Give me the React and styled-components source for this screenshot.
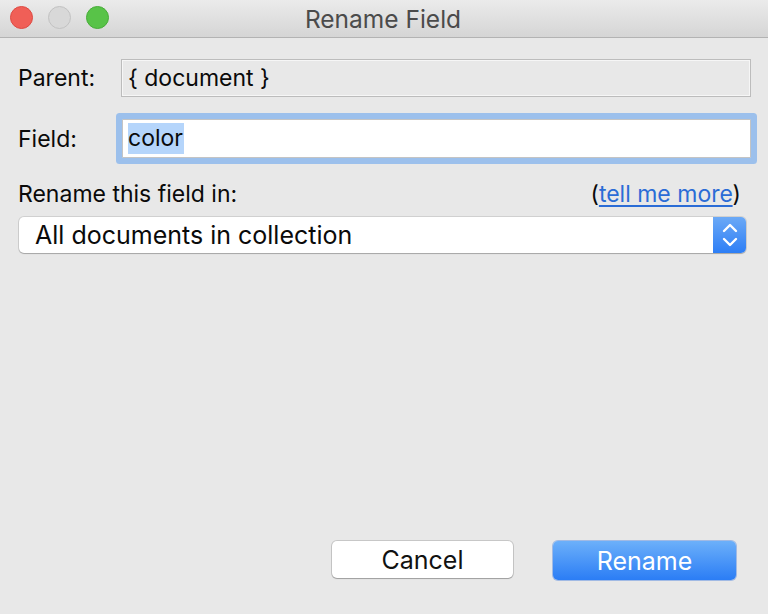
import React from 'react';
import styled, { createGlobalStyle } from 'styled-components';

const Global = createGlobalStyle`
  html, body {
    margin: 0;
    padding: 0;
    height: 100%;
  }
  body {
    background: #e8e8e8;
    font-family: Inter, "Noto Sans", "Liberation Sans", sans-serif;
    color: #0a0a0a;
  }
  #root {
    height: 100%;
  }
`;

const Window = styled.div`
  display: flex;
  flex-direction: column;
  height: 100vh;
  background: #e8e8e8;
`;

const TitleBar = styled.div`
  position: relative;
  height: 37px;
  flex-shrink: 0;
  display: flex;
  align-items: center;
  justify-content: center;
  background: linear-gradient(#ebebeb, #d5d5d5);
  border-bottom: 1px solid #b3b3b3;
`;

const Lights = styled.div`
  position: absolute;
  left: 10px;
  top: 6px;
  display: flex;
  gap: 15px;
`;

const Light = styled.span`
  width: 23px;
  height: 23px;
  border-radius: 50%;
  box-sizing: border-box;
  background: ${p => p.$bg};
  border: 1px solid ${p => p.$edge};
`;

const Title = styled.div`
  font-size: 24.5px;
  color: #4b4b4b;
  margin-left: -2px;
`;

const Body = styled.div`
  flex: 1;
  display: flex;
  flex-direction: column;
  padding: 21px 17px 0 18px;
`;

const FormGrid = styled.div`
  display: grid;
  grid-template-columns: 103px 1fr;
  row-gap: 22px;
  align-items: center;
`;

const Label = styled.div`
  font-size: 23px;
  line-height: 26px;
`;

const ReadOnlyBox = styled.div`
  height: 38px;
  box-sizing: border-box;
  border: 1px solid #bcbcbc;
  box-shadow: inset 0 0 0 1px #f6f6f6;
  background: #e8e8e8;
  display: flex;
  align-items: center;
  padding-left: 6px;
  font-size: 23px;
`;

const InputBox = styled.div`
  height: 39px;
  margin-left: 1px;
  box-sizing: border-box;
  border: 1px solid #c4c4c4;
  background: #fff;
  display: flex;
  align-items: center;
  padding-left: 5px;
  font-size: 23px;
  box-shadow: 0 0 0 1px #9cc0ec, 0 0 0 6px #9cc0ec;
  border-radius: 1px;
`;

const Selected = styled.span`
  background: #b5d5fb;
  line-height: 31px;
  padding-right: 1px;
`;

const RenameRow = styled.div`
  display: flex;
  justify-content: space-between;
  align-items: center;
  margin-top: 23px;
  padding-right: 10px;
  font-size: 23px;
  line-height: 26px;
`;

const Link = styled.a`
  color: #2b6cd6;
  text-decoration: underline;
  text-underline-offset: 3px;
  text-decoration-thickness: 2px;
  cursor: pointer;
`;

const Select = styled.div`
  margin-top: 10px;
  margin-left: 1px;
  margin-right: 5px;
  height: 36px;
  display: flex;
  border-radius: 5px;
  background: #fff;
  box-shadow: 0 0 0 1px rgba(0, 0, 0, 0.1), 0 1px 1px rgba(0, 0, 0, 0.2);
  overflow: hidden;
`;

const SelectValue = styled.div`
  flex: 1;
  display: flex;
  align-items: center;
  padding-left: 16px;
  font-size: 25px;
`;

const Stepper = styled.div`
  width: 33px;
  display: flex;
  align-items: center;
  justify-content: center;
  background: linear-gradient(#6ba9f6, #2d7ef6);
`;

const Footer = styled.div`
  margin-top: auto;
  display: flex;
  justify-content: flex-end;
  gap: 40px;
  padding: 0 15px 34px 0;
`;

const Button = styled.button`
  width: ${p => (p.$primary ? '183px' : '181px')};
  height: ${p => (p.$primary ? '39px' : '37px')};
  border-radius: 5px;
  font-family: inherit;
  font-size: 25px;
  cursor: pointer;
  border: none;
  ${p =>
    p.$primary
      ? `
    color: #fff;
    background: linear-gradient(#6cb0fa, #2b7df5);
    box-shadow: 0 0 0 1px rgba(30, 100, 220, 0.35);
  `
      : `
    color: #111;
    background: #fff;
    box-shadow: 0 0 0 1px rgba(0, 0, 0, 0.14), 0 1px 1px rgba(0, 0, 0, 0.2);
  `}
`;

const Chevrons = () => (
  <svg width="20" height="30" viewBox="0 0 20 30" fill="none">
    <path d="M4 11 L10 5 L16 11" stroke="#fff" strokeWidth="2.4" strokeLinecap="round" strokeLinejoin="round" />
    <path d="M4 19 L10 25 L16 19" stroke="#fff" strokeWidth="2.4" strokeLinecap="round" strokeLinejoin="round" />
  </svg>
);

export default function App() {
  return (
    <Window>
      <Global />
      <TitleBar>
        <Lights>
          <Light $bg="#f05f57" $edge="#de4a42" />
          <Light $bg="#d8d8d8" $edge="#c2c2c2" />
          <Light $bg="#58c348" $edge="#47ad38" />
        </Lights>
        <Title>Rename Field</Title>
      </TitleBar>
      <Body>
        <FormGrid>
          <Label>Parent:</Label>
          <ReadOnlyBox>{'{ document }'}</ReadOnlyBox>
          <Label>Field:</Label>
          <InputBox>
            <Selected>color</Selected>
          </InputBox>
        </FormGrid>
        <RenameRow>
          <span>Rename this field in:</span>
          <span>
            (<Link>tell me more</Link>)
          </span>
        </RenameRow>
        <Select>
          <SelectValue>All documents in collection</SelectValue>
          <Stepper>
            <Chevrons />
          </Stepper>
        </Select>
        <Footer>
          <Button>Cancel</Button>
          <Button $primary>Rename</Button>
        </Footer>
      </Body>
    </Window>
  );
}
